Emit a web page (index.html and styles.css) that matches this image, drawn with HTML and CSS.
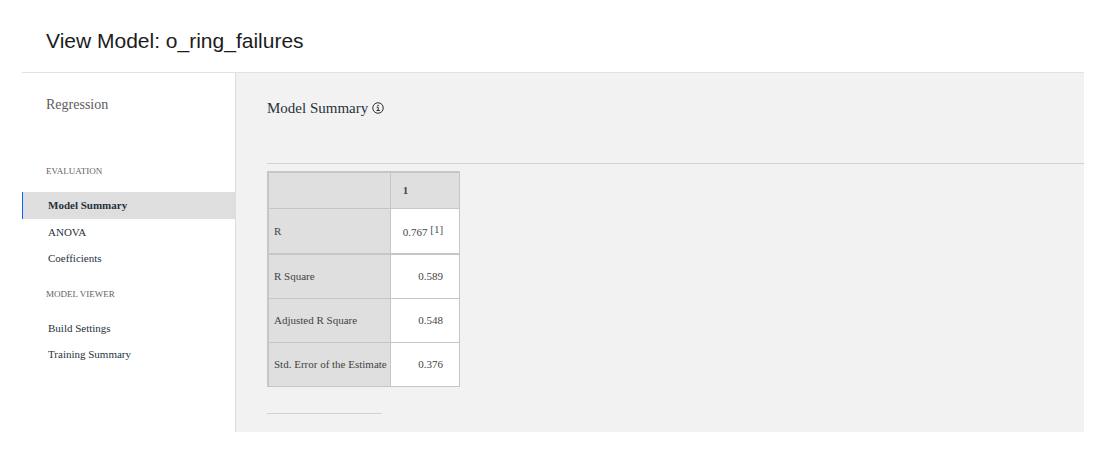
FILE: index.html
```html
<!DOCTYPE html>
<html lang="en">
<head>
<meta charset="utf-8">
<title>View Model: o_ring_failures</title>
<link rel="stylesheet" href="styles.css">
</head>
<body>
<div class="page">
  <header class="header"><h1 class="title">View Model: o_ring_failures</h1></header>
  <div class="body">
    <nav class="sidebar">
      <h2 class="model-type">Regression</h2>
      <h3 class="group">EVALUATION</h3>
      <ul class="menu">
        <li><a class="item selected" href="#summary" aria-current="page">Model Summary</a></li>
        <li><a class="item" href="#anova">ANOVA</a></li>
        <li><a class="item" href="#coefficients">Coefficients</a></li>
      </ul>
      <h3 class="group">MODEL VIEWER</h3>
      <ul class="menu">
        <li><a class="item" href="#settings">Build Settings</a></li>
        <li><a class="item" href="#training">Training Summary</a></li>
      </ul>
    </nav>
    <main class="content" id="summary">
      <div class="heading">
        <h2 class="heading-text">Model Summary</h2>
        <button class="info" type="button" aria-label="Information">
          <svg class="info-icon" viewBox="0 0 32 32" aria-hidden="true">
            <circle cx="16" cy="16" r="14" fill="none" stroke="currentColor" stroke-width="2.5"/>
            <path d="M12.5 14H16.5V22.5M12 22.7H21" fill="none" stroke="currentColor" stroke-width="2.6"/>
            <circle cx="16" cy="9" r="2" fill="currentColor"/>
          </svg>
        </button>
      </div>
      <div class="result">
        <table class="stats">
          <thead><tr><td class="corner"></td><th class="column" scope="col">1</th></tr></thead>
          <tbody>
            <tr class="noted"><th scope="row">R</th><td>0.767 <a class="note" href="#note">[1]</a></td></tr>
            <tr><th scope="row">R Square</th><td>0.589</td></tr>
            <tr><th scope="row">Adjusted R Square</th><td>0.548</td></tr>
            <tr><th scope="row">Std. Error of the Estimate</th><td>0.376</td></tr>
          </tbody>
        </table>
        <hr class="note-rule" id="note">
      </div>
    </main>
  </div>
</div>
</body>
</html>
```
FILE: styles.css
```css
* { box-sizing: border-box; }
body {
  margin: 0;
  background: #fff;
  color: #27323d;
  font-family: "Liberation Serif", "Times New Roman", serif;
  font-size: 11px;
}
h1, h2, h3 { margin: 0; font-weight: 400; }
.page {
  display: flex;
  flex-direction: column;
  min-height: 100vh;
  padding: 8px 25px 24px 22px;
}
.header {
  padding: 20px 24px 19px;
  border-bottom: 1px solid #e2e2e2;
}
.title {
  color: #1c1c1c;
  font-family: "Liberation Sans", Arial, sans-serif;
  font-size: 21px;
  line-height: 25px;
}
.body { display: flex; flex: 1; }
.sidebar {
  flex: none;
  width: 214px;
  padding-top: 24px;
  border-right: 1px solid #dedede;
}
.model-type {
  margin-bottom: 50px;
  padding-left: 24px;
  color: #5c5c5c;
  font-size: 14px;
  line-height: 16px;
}
.group {
  padding-left: 24px;
  color: #626262;
  font-size: 9px;
  line-height: 16px;
}
.menu {
  margin: 13px 0 15px;
  padding: 0;
  list-style: none;
}
.item {
  display: block;
  padding-left: 25px;
  border-left: 1px solid transparent;
  color: inherit;
  line-height: 26px;
  text-decoration: none;
}
.selected {
  border-left: 1px solid #0f62fe;
  background: #dedede;
  font-weight: 700;
  line-height: 27px;
}
.content {
  flex: 1;
  padding: 26px 0 18px 31px;
  background: #f2f2f2;
}
.heading {
  display: flex;
  align-items: center;
  gap: 4px;
}
.heading-text { font-size: 15px; line-height: 18px; }
.info {
  display: flex;
  padding: 0;
  border: 0;
  background: none;
  color: #222;
}
.info-icon { width: 12px; height: 12px; }
.result {
  margin-top: 46px;
  padding-top: 7px;
  border-top: 1px solid #d2d2d2;
}
.stats {
  border: 2px solid #c6c6c6;
  border-right-width: 1px;
  border-bottom-width: 1px;
  border-collapse: collapse;
  color: #444;
}
.stats th, .stats td {
  height: 44px;
  border: 1px solid #c6c6c6;
}
.stats th {
  padding: 0 3px 0 5px;
  background: #dfdfdf;
  font-weight: 400;
  text-align: left;
}
.stats td {
  padding: 0 16px 0 12px;
  background: #fff;
  text-align: right;
}
.stats .corner { background: #dfdfdf; }
.stats .corner, .stats .column { height: 36px; }
.stats .column { padding-left: 12px; font-weight: 700; }
.stats .noted th, .stats .noted td { height: 46px; border-bottom-width: 2px; }
.note {
  color: #41565f;
  line-height: 1;
  text-decoration: none;
  vertical-align: 3px;
}
.note-rule {
  width: 115px;
  margin: 26px 0 0;
  border: 0;
  border-top: 1px solid #d2d2d2;
}
```
